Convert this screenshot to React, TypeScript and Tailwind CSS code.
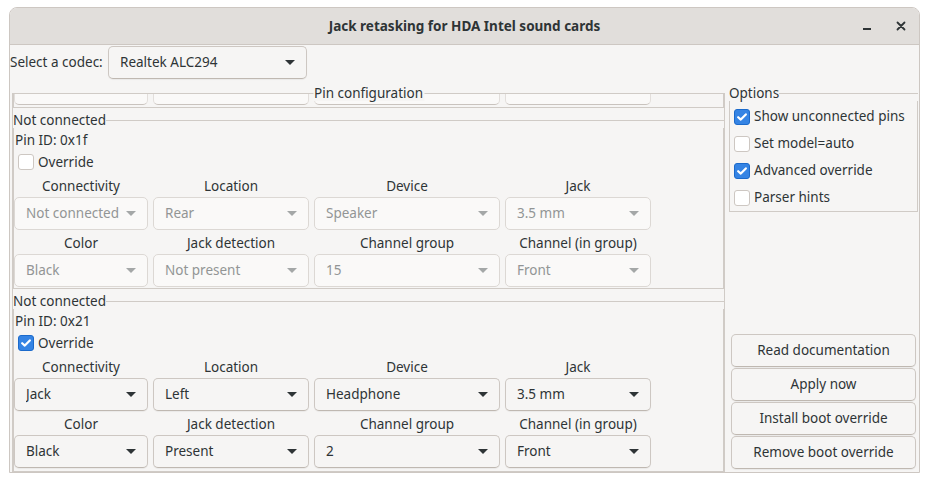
import React from 'react';

type Pin = {
  id: string;
  override: boolean;
  top: string[];
  bottom: string[];
};

const PINS: Pin[] = [
  { id: '0x1f', override: false, top: ['Not connected', 'Rear', 'Speaker', '3.5 mm'], bottom: ['Black', 'Not present', '15', 'Front'] },
  { id: '0x21', override: true, top: ['Jack', 'Left', 'Headphone', '3.5 mm'], bottom: ['Black', 'Present', '2', 'Front'] },
];

const TOP_HEADERS = ['Connectivity', 'Location', 'Device', 'Jack'];
const BOTTOM_HEADERS = ['Color', 'Jack detection', 'Channel group', 'Channel (in group)'];

const OPTIONS = [
  { label: 'Show unconnected pins', on: true },
  { label: 'Set model=auto', on: false },
  { label: 'Advanced override', on: true },
  { label: 'Parser hints', on: false },
];

const ACTIONS = ['Read documentation', 'Apply now', 'Install boot override', 'Remove boot override'];

const cols = 'grid grid-cols-[134px_156px_186px_146px] gap-x-[5px]';

function Arrow({ dim }: { dim?: boolean }) {
  return (
    <svg width="10" height="5" viewBox="0 0 10 5" className={dim ? 'shrink-0 fill-[#a4a7a7]' : 'shrink-0 fill-[#2e3436]'}>
      <path d="M0 0h10L5 5z" />
    </svg>
  );
}

function Combo({ value, dim }: { value: string; dim?: boolean }) {
  return (
    <div
      className={`flex h-[33px] items-center gap-[4px] rounded-[5px] border pl-[11px] pr-[11px] ${
        dim
          ? 'border-[#dcd8d4] bg-[#faf9f8] text-[#929595]'
          : 'border-[#cdc7c2] border-b-[#bfb8b1] bg-[#f6f5f4] text-[#2e3436] shadow-[0_1px_1px_rgba(0,0,0,0.05)]'
      }`}
    >
      <span className="flex-1 truncate">{value}</span>
      <Arrow dim={dim} />
    </div>
  );
}

function Check({ on }: { on?: boolean }) {
  if (on) {
    return (
      <span className="flex h-[16px] w-[16px] shrink-0 items-center justify-center rounded-[3px] border border-[#1b6acb] bg-[#3584e4]">
        <svg width="10" height="8" viewBox="0 0 10 8">
          <path d="M1.2 4.2 3.8 6.6 8.8 1.4" fill="none" stroke="#fff" strokeWidth="2.2" strokeLinecap="round" strokeLinejoin="round" />
        </svg>
      </span>
    );
  }
  return <span className="h-[16px] w-[16px] shrink-0 rounded-[3px] border border-[#cdc7c2] bg-white" />;
}

function FrameLabel({ label }: { label: string }) {
  return (
    <div className="flex h-[16px] items-center leading-[16px]">
      <span>{label}</span>
      <div className="h-px flex-1 bg-[#d0cbc6]" />
    </div>
  );
}

function PinFrame({ pin, last }: { pin: Pin; last?: boolean }) {
  const dim = !pin.override;
  return (
    <div className="mt-[4px] shrink-0">
      <FrameLabel label="Not connected" />
      <div className={`border-x border-b border-[#d0cbc6] pt-[2px] ${last ? 'pb-[4px]' : 'pb-[1px]'}`}>
        <div className="flex h-[20px] items-center pl-[1px]">Pin ID: {pin.id}</div>
        <div className="mt-[1px] flex h-[22px] items-center gap-[4px] pl-[4px]">
          <Check on={pin.override} />
          <span>Override</span>
        </div>
        <div className={`${cols} mt-[3px] h-[20px] items-center text-center`}>
          {TOP_HEADERS.map((h) => (
            <span key={h}>{h}</span>
          ))}
        </div>
        <div className={`${cols} mt-[1px]`}>
          {pin.top.map((v, i) => (
            <Combo key={i} value={v} dim={dim} />
          ))}
        </div>
        <div className={`${cols} mt-[3px] h-[20px] items-center text-center`}>
          {BOTTOM_HEADERS.map((h) => (
            <span key={h}>{h}</span>
          ))}
        </div>
        <div className={`${cols} mt-[1px]`}>
          {pin.bottom.map((v, i) => (
            <Combo key={i} value={v} dim={dim} />
          ))}
        </div>
      </div>
    </div>
  );
}

export default function App() {
  return (
    <div className="h-[483px] w-[928px] bg-white pl-[9px] pt-[7px] text-[13.5px] text-[#2e3436] font-['Noto_Sans',sans-serif]">
      <div className="flex h-[466px] w-[911px] flex-col overflow-hidden rounded-t-[8px] border border-[#cdc7c2] bg-[#f6f5f4]">
        {/* title bar */}
        <div className="grid h-[37px] shrink-0 grid-cols-[1fr_auto_1fr] items-center border-b border-[#cdc7c2] bg-[#e1dedb]">
          <div />
          <span className="text-[13.5px] font-bold">Jack retasking for HDA Intel sound cards</span>
          <div className="flex h-full justify-end pr-[1px]">
            <div className="flex w-[34px] items-center justify-center">
              <svg width="10" height="10" viewBox="0 0 10 10">
                <rect x="1" y="7" width="8" height="2" fill="#2e3436" />
              </svg>
            </div>
            <div className="flex w-[34px] items-center justify-center">
              <svg width="10" height="10" viewBox="0 0 10 10">
                <path d="M1.5 1.5l7 7M8.5 1.5l-7 7" stroke="#2e3436" strokeWidth="1.8" strokeLinecap="round" />
              </svg>
            </div>
          </div>
        </div>

        {/* codec chooser */}
        <div className="mt-[1px] flex h-[33px] shrink-0 items-center">
          <span className="w-[98px] shrink-0">Select a codec:</span>
          <div className="w-[199px]">
            <div className="flex h-[33px] items-center rounded-[5px] border border-[#cdc7c2] border-b-[#bfb8b1] bg-[#f6f5f4] pl-[11px] pr-[11px] shadow-[0_1px_1px_rgba(0,0,0,0.05)]">
              <span className="flex-1">Realtek ALC294</span>
              <Arrow />
            </div>
          </div>
        </div>

        <div className="mt-[6px] flex min-h-0 flex-1">
          {/* pin configuration */}
          <div className="relative ml-[2px] flex w-[713px] flex-col pt-[8px]">
            <span className="absolute left-1/2 top-0 -translate-x-1/2 bg-[#f6f5f4] px-[1px] leading-[16px]">Pin configuration</span>
            <div className="flex min-h-0 flex-1 flex-col overflow-hidden border border-[#d0cbc6]">
              {/* tail of the pin above, scrolled out of view */}
              <div className="h-[14px] shrink-0 border-x border-b border-[#d0cbc6]">
                <div className={cols}>
                  {[0, 1, 2, 3].map((i) => (
                    <div key={i} className="h-[11px] rounded-b-[5px] border-x border-b border-x-[#e2dedb] border-b-[#c9c3be] bg-[#faf9f8]" />
                  ))}
                </div>
              </div>
              {PINS.map((p, i) => (
                <PinFrame key={p.id} pin={p} last={i === PINS.length - 1} />
              ))}
            </div>
          </div>

          {/* options + actions */}
          <div className="ml-[4px] flex w-[189px] flex-col">
            <FrameLabel label="Options" />
            <div className="border-x border-b border-[#d0cbc6] pl-[4px] pt-[2px]">
              {OPTIONS.map((o) => (
                <div key={o.label} className="flex h-[27px] items-center gap-[4px]">
                  <Check on={o.on} />
                  <span>{o.label}</span>
                </div>
              ))}
            </div>
            <div className="mt-auto flex flex-col gap-[1px] px-[2px] pb-[3px]">
              {ACTIONS.map((a) => (
                <button
                  key={a}
                  className="h-[33px] rounded-[5px] border border-[#cdc7c2] border-b-[#bfb8b1] bg-[#f6f5f4] text-center shadow-[0_1px_1px_rgba(0,0,0,0.05)]"
                >
                  {a}
                </button>
              ))}
            </div>
          </div>
        </div>
      </div>
    </div>
  );
}
